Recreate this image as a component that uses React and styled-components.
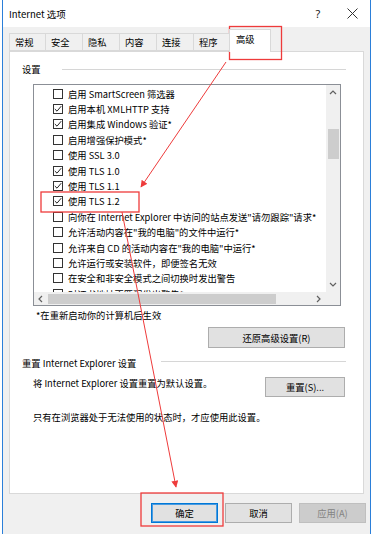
import React from "react";
import styled, { createGlobalStyle } from "styled-components";

const GlobalStyle = createGlobalStyle`
  html, body { margin: 0; padding: 0; background: #fff; }
  body {
    font-family: "Noto Sans CJK SC", "Noto Sans", sans-serif;
    font-size: 9.3px;
    color: #000;
  }
  * { box-sizing: border-box; }
`;

const Page = styled.div`
  position: relative;
  width: 374px;
  height: 534px;
  overflow: hidden;
  background: #fff;
`;

const Window = styled.div`
  margin-left: 2px;
  width: 369px;
  height: 534px;
  border-left: 1px solid #2b7fd9;
  border-right: 1px solid #2b7fd9;
  display: flex;
  flex-direction: column;
`;

const TitleBar = styled.div`
  height: 27px;
  background: #fff;
  display: flex;
  align-items: center;
  padding-left: 6px;
  padding-right: 1px;
`;

const Title = styled.div`
  flex: 1;
  font-size: 9.5px;
`;

const CaptionBtn = styled.div`
  width: 34px;
  height: 27px;
  display: flex;
  align-items: center;
  justify-content: center;
  font-family: "Noto Sans", sans-serif;
  font-size: 11px;
  color: #222;
`;

const Body = styled.div`
  flex: 1;
  background: #f0f0f0;
  padding: 2px 6px 0 6px;
  display: flex;
  flex-direction: column;
`;

const TabRow = styled.div`
  display: flex;
  align-items: flex-end;
  height: 22px;
  position: relative;
  z-index: 1;
`;

const Tab = styled.div`
  width: ${(p) => p.$w}px;
  height: ${(p) => (p.$active ? 23 : 18)}px;
  margin-left: -1px;
  margin-bottom: ${(p) => (p.$active ? -1 : 0)}px;
  padding-left: ${(p) => (p.$active ? 6 : 5)}px;
  padding-bottom: ${(p) => (p.$active ? 4 : 1)}px;
  display: flex;
  align-items: center;
  background: ${(p) => (p.$active ? "#fff" : "#f0f0f0")};
  border: 1px solid #d9d9d9;
  border-bottom: ${(p) => (p.$active ? "none" : "1px solid #d9d9d9")};
  &:first-child { margin-left: 0; }
`;

const Panel = styled.div`
  width: 355px;
  height: 443px;
  background: #fff;
  border: 1px solid #d9d9d9;
  padding-top: 10px;
  display: flex;
  flex-direction: column;
`;

const Legend = styled.div`
  display: flex;
  align-items: center;
  height: 14px;
  padding-left: 12px;
  margin-top: ${(p) => p.$mt || 0}px;
`;

const LegendLine = styled.div`
  flex: 1;
  height: 1px;
  background: #d6d6d6;
  margin-left: ${(p) => p.$gap}px;
  margin-right: 17px;
  margin-top: ${(p) => p.$dy || 0}px;
`;

const ListBox = styled.div`
  margin: 8px 0 0 23px;
  width: 308px;
  height: 222px;
  border: 1px solid #8b8f96;
  display: grid;
  grid-template-columns: 1fr 14px;
  grid-template-rows: 1fr 13px;
  overflow: hidden;
`;

const Items = styled.div`
  overflow: hidden;
  padding: 1px 0 0 19px;
`;

const Item = styled.div`
  height: 15.4px;
  display: flex;
  align-items: center;
  white-space: nowrap;
`;

const Check = styled.span`
  width: 10px;
  height: 10px;
  border: 1px solid #333;
  background: #fff;
  margin-right: 5px;
  flex: none;
  display: flex;
  align-items: center;
  justify-content: center;
`;

const VScroll = styled.div`
  background: #f0f0f0;
  display: flex;
  flex-direction: column;
  align-items: center;
`;

const Thumb = styled.div`
  width: 11px;
  height: 30px;
  background: #cdcdcd;
  margin-top: 29px;
`;

const ArrowSlot = styled.div`
  width: 14px;
  height: 14px;
  display: flex;
  align-items: center;
  justify-content: center;
  margin-top: ${(p) => p.$mt || 0}px;
  margin-left: ${(p) => (p.$end ? "auto" : "0")};
`;

const HScroll = styled.div`
  background: #f0f0f0;
  display: flex;
  align-items: center;
`;

const HThumb = styled.div`
  width: 228px;
  height: 10px;
  background: #cdcdcd;
`;

const Corner = styled.div`
  background: #f0f0f0;
`;

const Note = styled.div`
  margin: 2px 0 0 26px;
  line-height: 14px;
`;

const Button = styled.div`
  width: ${(p) => p.$w}px;
  height: ${(p) => p.$h || 20}px;
  display: flex;
  align-items: center;
  justify-content: center;
  background: ${(p) => (p.$disabled ? "#cccccc" : "#e1e1e1")};
  color: ${(p) => (p.$disabled ? "#838383" : "#000")};
  border: 1px solid
    ${(p) => (p.$primary ? "#0078d7" : p.$disabled ? "#bfbfbf" : "#adadad")};
  box-shadow: ${(p) => (p.$primary ? "inset 0 0 0 1px #4a9be0" : "none")};
  flex: none;
`;

const RightAlign = styled.div`
  display: flex;
  justify-content: flex-end;
  padding-right: 18px;
  margin-top: 5px;
`;

const ResetRow = styled.div`
  display: flex;
  align-items: flex-start;
  justify-content: space-between;
  padding: 0 18px 0 23px;
  margin-top: 7px;
`;

const Text = styled.div`
  line-height: 14px;
  margin-top: ${(p) => p.$mt || 0}px;
  padding-left: ${(p) => p.$pl || 0}px;
`;

const Footer = styled.div`
  display: flex;
  justify-content: flex-end;
  gap: 7px;
  padding-top: 9px;
  margin-right: -2px;
`;

const Overlay = styled.svg`
  position: absolute;
  top: 0;
  left: 0;
  pointer-events: none;
`;

const items = [
  ["启用 SmartScreen 筛选器", false],
  ["启用本机 XMLHTTP 支持", true],
  ["启用集成 Windows 验证*", true],
  ["启用增强保护模式*", false],
  ["使用 SSL 3.0", false],
  ["使用 TLS 1.0", true],
  ["使用 TLS 1.1", true],
  ["使用 TLS 1.2", true],
  ["向你在 Internet Explorer 中访问的站点发送\"请勿跟踪\"请求*", false],
  ["允许活动内容在\"我的电脑\"的文件中运行*", false],
  ["允许来自 CD 的活动内容在\"我的电脑\"中运行*", false],
  ["允许运行或安装软件，即便签名无效", false],
  ["在安全和非安全模式之间切换时发出警告", false],
  ["对证书地址不匹配发出警告*", false],
];

const tabs = [
  ["常规", 37],
  ["安全", 38],
  ["隐私", 38],
  ["内容", 38],
  ["连接", 38],
  ["程序", 37],
];

const Chevron = ({ dir }) => {
  const pts = {
    up: "1,5 4,2 7,5",
    down: "1,2 4,5 7,2",
    left: "5,1 2,4 5,7",
    right: "2,1 5,4 2,7",
  }[dir];
  return (
    <svg width="8" height="8" viewBox="0 0 8 8">
      <polyline points={pts} fill="none" stroke="#606060" strokeWidth="1.2" />
    </svg>
  );
};

const red = "#ee3b3b";

export default function App() {
  return (
    <Page>
      <GlobalStyle />
      <Window>
        <TitleBar>
          <Title>Internet 选项</Title>
          <CaptionBtn>?</CaptionBtn>
          <CaptionBtn>
            <svg width="11" height="11" viewBox="0 0 11 11">
              <path d="M0.5 0.5 L10.5 10.5 M10.5 0.5 L0.5 10.5" stroke="#333" strokeWidth="1" />
            </svg>
          </CaptionBtn>
        </TitleBar>
        <Body>
          <TabRow>
            {tabs.map(([t, w]) => (
              <Tab key={t} $w={w}>{t}</Tab>
            ))}
            <Tab $w={42} $active>高级</Tab>
          </TabRow>
          <Panel>
            <Legend>
              设置
              <LegendLine $gap={21} />
            </Legend>
            <ListBox>
              <Items>
                {items.map(([label, on]) => (
                  <Item key={label}>
                    <Check>
                      {on && (
                        <svg width="8" height="8" viewBox="0 0 8 8">
                          <polyline points="0.8,4 3,6.2 7.2,1.2" fill="none" stroke="#222" strokeWidth="1" />
                        </svg>
                      )}
                    </Check>
                    {label}
                  </Item>
                ))}
              </Items>
              <VScroll>
                <ArrowSlot $mt={1}><Chevron dir="up" /></ArrowSlot>
                <Thumb />
                <ArrowSlot $mt={119}><Chevron dir="down" /></ArrowSlot>
              </VScroll>
              <HScroll>
                <ArrowSlot><Chevron dir="left" /></ArrowSlot>
                <HThumb />
                <ArrowSlot $end><Chevron dir="right" /></ArrowSlot>
              </HScroll>
              <Corner />
            </ListBox>
            <Note>*在重新启动你的计算机后生效</Note>
            <RightAlign>
              <Button $w={137} $h={21}>还原高级设置(R)</Button>
            </RightAlign>
            <Legend $mt={8}>
              重置 Internet Explorer 设置
              <LegendLine $gap={25} $dy={-3} />
            </Legend>
            <ResetRow>
              <Text $mt={-1}>将 Internet Explorer 设置重置为默认设置。</Text>
              <Button $w={80}>重置(S)...</Button>
            </ResetRow>
            <Text $mt={13} $pl={23}>只有在浏览器处于无法使用的状态时，才应使用此设置。</Text>
          </Panel>
          <Footer>
            <Button $w={67} $primary>确定</Button>
            <Button $w={67}>取消</Button>
            <Button $w={67} $disabled>应用(A)</Button>
          </Footer>
        </Body>
      </Window>
      <Overlay width="374" height="534" viewBox="0 0 374 534">
        <defs>
          <marker id="head" viewBox="0 0 10 10" refX="9" refY="5" markerWidth="7" markerHeight="7" orient="auto">
            <path d="M0 0 L10 5 L0 10 Z" fill={red} />
          </marker>
        </defs>
        <rect x="229.5" y="26.5" width="52" height="33" fill="none" stroke={red} strokeWidth="1.3" />
        <rect x="41" y="192" width="98" height="20" fill="none" stroke={red} strokeWidth="1.3" />
        <rect x="141" y="493" width="82" height="33" fill="none" stroke={red} strokeWidth="1.3" />
        <line x1="226" y1="62" x2="141" y2="187" stroke={red} strokeWidth="1" markerEnd="url(#head)" />
        <line x1="122" y1="212" x2="176" y2="487" stroke={red} strokeWidth="1" markerEnd="url(#head)" />
      </Overlay>
    </Page>
  );
}
